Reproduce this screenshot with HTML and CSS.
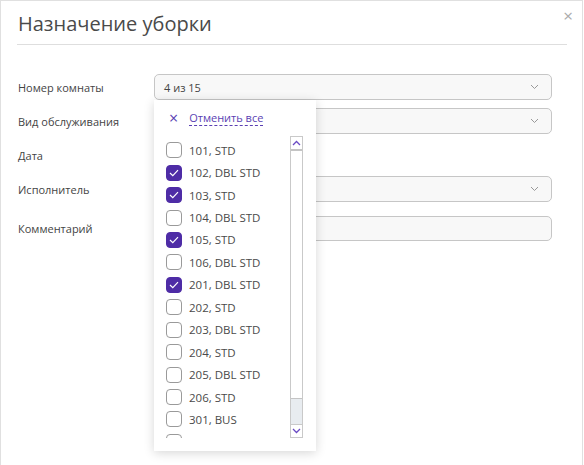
FILE: index.html
```html
<!DOCTYPE html>
<html>
<head>
    <meta charset="utf-8">
    <title>Назначение уборки</title>
    <link rel="stylesheet" href="styles.css">
</head>
<body>
    <div class="modal">
        <div class="modal-head">
            <h1 class="modal-title">Назначение уборки</h1>
            <span class="modal-close">&times;</span>
        </div>

        <div class="form">
            <div class="row">
                <label class="row-label">Номер комнаты</label>
                <div class="field-wrap">
                    <div class="select">
                        <span>4 из 15</span>
                        <svg class="chev" width="9" height="6" viewBox="0 0 9 6"><path d="M1 1l3.5 3.5L8 1" fill="none" stroke="#999" stroke-width="1"/></svg>
                    </div>

                    <div class="dropdown">
                        <div class="dd-head">
                            <span class="dd-x">&times;</span>
                            <span class="dd-clear">Отменить все</span>
                        </div>
                        <div class="dd-body">
                            <ul class="dd-list" id="rooms"></ul>
                            <div class="sbar">
                                <div class="sbar-btn">
                                    <svg width="9" height="6" viewBox="0 0 9 6"><path d="M1 5l3.5-3.5L8 5" fill="none" stroke="#6a4bc4" stroke-width="1.3"/></svg>
                                </div>
                                <div class="sbar-thumb"></div>
                                <div class="sbar-track"></div>
                                <div class="sbar-btn">
                                    <svg width="9" height="6" viewBox="0 0 9 6"><path d="M1 1l3.5 3.5L8 1" fill="none" stroke="#6a4bc4" stroke-width="1.3"/></svg>
                                </div>
                            </div>
                        </div>
                    </div>
                </div>
            </div>

            <div class="row">
                <label class="row-label">Вид обслуживания</label>
                <div class="select">
                    <span></span>
                    <svg class="chev" width="9" height="6" viewBox="0 0 9 6"><path d="M1 1l3.5 3.5L8 1" fill="none" stroke="#999" stroke-width="1"/></svg>
                </div>
            </div>

            <div class="row">
                <label class="row-label">Дата</label>
                <div class="date"></div>
            </div>

            <div class="row">
                <label class="row-label">Исполнитель</label>
                <div class="select">
                    <span></span>
                    <svg class="chev" width="9" height="6" viewBox="0 0 9 6"><path d="M1 1l3.5 3.5L8 1" fill="none" stroke="#999" stroke-width="1"/></svg>
                </div>
            </div>

            <div class="row row-comment">
                <label class="row-label">Комментарий</label>
                <div class="input"></div>
            </div>
        </div>
    </div>

    <script>
        const rooms = [
            ["101, STD", false], ["102, DBL STD", true], ["103, STD", true],
            ["104, DBL STD", false], ["105, STD", true], ["106, DBL STD", false],
            ["201, DBL STD", true], ["202, STD", false], ["203, DBL STD", false],
            ["204, STD", false], ["205, DBL STD", false], ["206, STD", false],
            ["301, BUS", false], ["302, SUT", false]
        ];
        const list = document.getElementById("rooms");
        for (const [name, checked] of rooms) {
            const li = document.createElement("li");
            li.className = "dd-item";
            li.innerHTML = '<span class="cb' + (checked ? ' cb-on' : '') + '">' +
                (checked ? '<svg width="10" height="8" viewBox="0 0 10 8"><path d="M1 4l2.8 2.6L9 1.2" fill="none" stroke="#fff" stroke-width="1.2"/></svg>' : '') +
                '</span><span>' + name + '</span>';
            list.appendChild(li);
        }
    </script>
</body>
</html>
```

FILE: styles.css
```css
body {
    margin: 0;
    background: #fff;
    font-family: "Open Sans", "Noto Sans", sans-serif;
    color: #444;
}
.modal {
    width: 581px;
    height: 470px;
    border: 1px solid #e0e0e0;
    background: #fff;
}
.modal-head {
    display: flex;
    justify-content: space-between;
    margin: 0 15px 0 16px;
    padding: 9px 0 7px 1px;
    border-bottom: 1px solid #dedede;
}
.modal-title {
    margin: 0;
    font-size: 20px;
    font-weight: 400;
    line-height: 27px;
    color: #4a4a4a;
}
.modal-close {
    margin: -1px -6px 0 0;
    font-size: 17px;
    line-height: 14px;
    color: #aaa;
}
.form {
    padding: 29px 30px 0 17px;
}
.row {
    display: flex;
    align-items: center;
    height: 26px;
    margin-bottom: 8px;
}
.row-comment {
    margin-top: 14px;
    height: 25px;
}
.row-label {
    width: 136px;
    flex: none;
    font-size: 11px;
}
.field-wrap {
    position: relative;
    flex: 1;
    height: 100%;
}
.select, .input {
    flex: 1;
    height: 100%;
    box-sizing: border-box;
    display: flex;
    align-items: center;
    justify-content: space-between;
    padding: 0 12px 0 9px;
    border: 1px solid #c6c6c6;
    border-radius: 5px;
    background: #f8f8f8;
    font-size: 11px;
    color: #444;
}
.date {
    width: 150px;
    height: 100%;
}
.dropdown {
    position: absolute;
    left: 0;
    top: 26px;
    width: 162px;
    height: 351px;
    background: #fff;
    box-shadow: 0 2px 10px rgba(0, 0, 0, 0.16);
    z-index: 2;
}
.dd-head {
    display: flex;
    align-items: center;
    height: 36px;
    padding-left: 15px;
    gap: 11px;
}
.dd-x {
    font-size: 16px;
    color: #5a3fb3;
}
.dd-clear {
    font-size: 11px;
    color: #5a3fb3;
    border-bottom: 1px dashed #5a3fb3;
    line-height: 14px;
}
.dd-body {
    display: flex;
    height: 302px;
}
.dd-list {
    list-style: none;
    margin: 0;
    padding: 3px 0 0 12px;
    flex: 1;
    overflow: hidden;
}
.dd-item {
    display: flex;
    align-items: center;
    gap: 7px;
    height: 22.45px;
    font-size: 11.5px;
    color: #4a4a4a;
}
.cb {
    width: 16px;
    height: 16px;
    box-sizing: border-box;
    border: 1px solid #9a9a9a;
    border-radius: 4px;
    flex: none;
    display: flex;
    align-items: center;
    justify-content: center;
}
.cb-on {
    background: #4e2ca6;
    border-color: #4e2ca6;
}
.sbar {
    width: 13px;
    margin-right: 13px;
    display: flex;
    flex-direction: column;
    border: 1px solid #c9c9c9;
    box-sizing: border-box;
}
.sbar-btn {
    height: 12px;
    display: flex;
    align-items: center;
    justify-content: center;
    background: #fff;
}
.sbar-thumb {
    height: 247px;
    border-top: 2px solid #c4c4c4;
    border-bottom: 1px solid #c4c4c4;
    background: #fff;
}
.sbar-track {
    flex: 1;
    background: #e8ecf0;
    border-bottom: 1px solid #c9c9c9;
}
```
